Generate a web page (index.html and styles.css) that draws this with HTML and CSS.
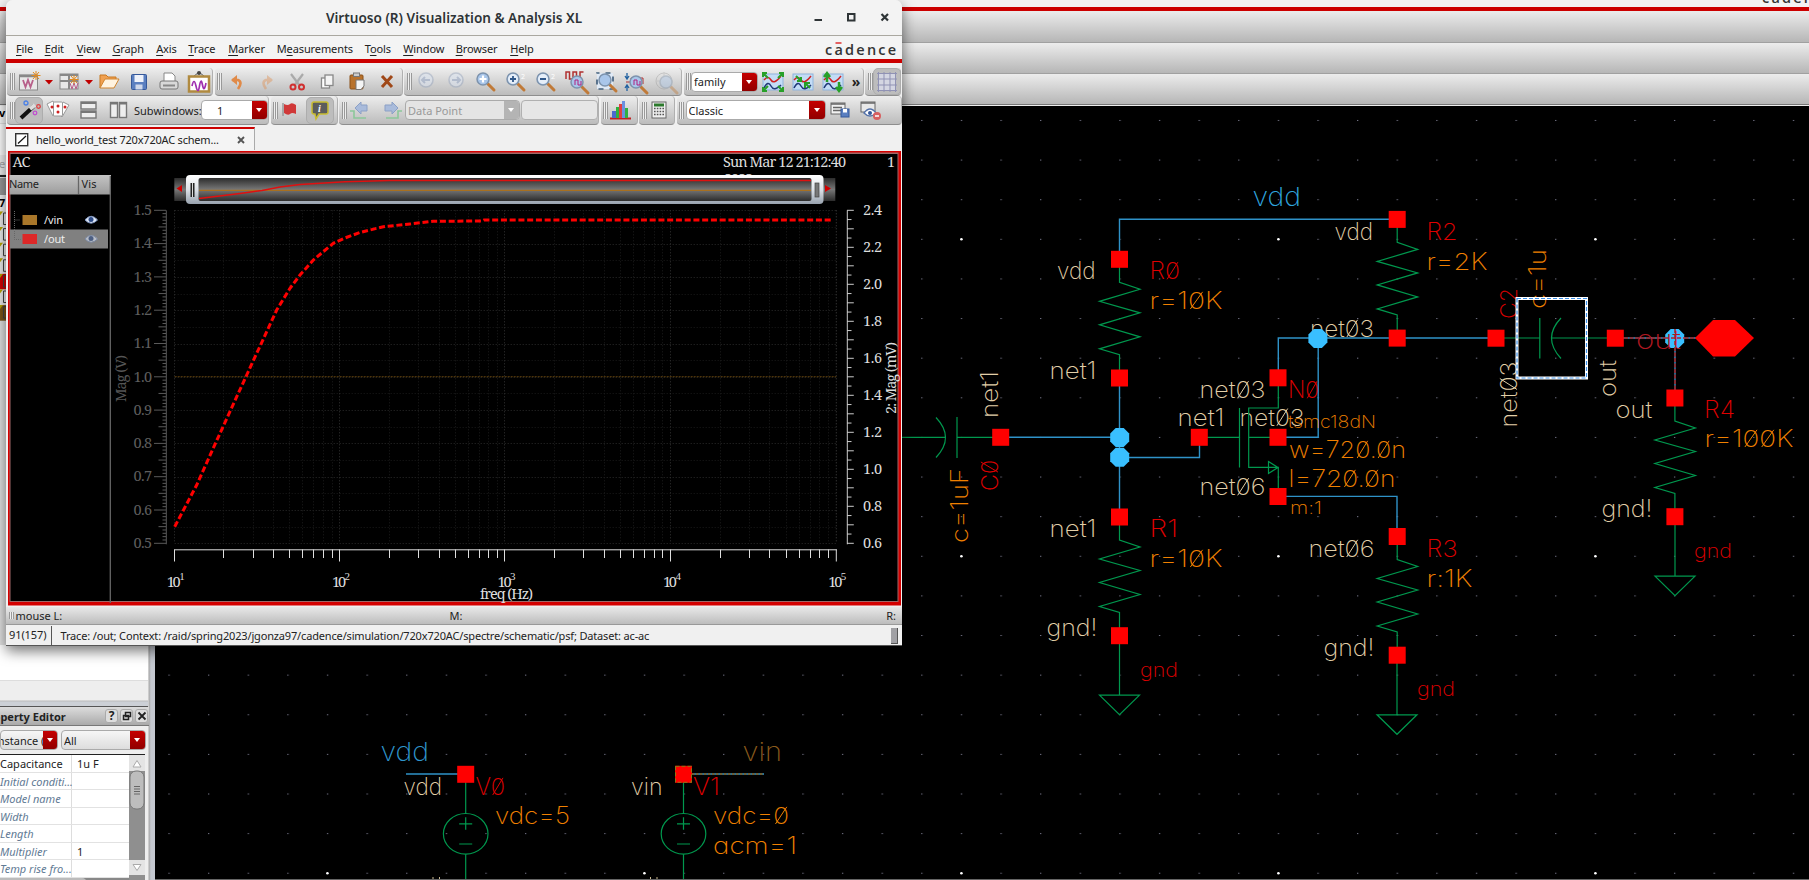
FILE: index.html
```html
<!DOCTYPE html>
<html lang="en">
<head>
<meta charset="utf-8">
<title>Virtuoso (R) Visualization &amp; Analysis XL</title>
<link rel="stylesheet" href="styles.css">
</head>
<body>
<div class="desktop">
  <header class="main-top">
    <div class="main-menu"><svg width="50" height="6"><text class="brand" x="3" y="2.5" textLength="71">cadence</text></svg></div>
    <div class="main-bar b1"></div>
    <div class="main-bar b2"></div>
    <div class="main-bar b3"></div>
  </header>
  <div class="main-body">
    <aside class="dock">
      <svg class="dock-strip" width="155" height="539" viewBox="0 106 155 539">
        <rect x="0" y="106" width="155" height="539" fill="#e2e2e2"/>
        <rect y="106" width="6" height="17" fill="#fafafa"/><text x="-1" y="117" class="strip-b">v</text>
        <rect y="124" width="6" height="31" fill="#fff"/><rect y="155" width="6" height="19" fill="#f0f0f0"/>
        <text x="-1" y="168" class="strip-g">e</text>
        <rect y="175" width="6" height="2" fill="#222"/><rect y="178" width="6" height="17" fill="#999"/>
        <rect y="195" width="6" height="16" fill="#f3f3f3"/><text x="-1" y="207" class="strip-b">7</text>
        <g id="strip"></g>
        <rect x="6" y="600" width="143" height="45" fill="#fff"/>
      </svg>
      <div class="blank"></div>
      <div class="gap"></div>
      <div class="prop-head"><span class="ph-text">Property Editor</span><i>?</i><i><svg width="10" height="10"><path d="M3.5 1.5h5v4h-5zM1.5 4.5h5v4h-5z" fill="#ddd" stroke="#222" stroke-width="1.5"/></svg></i><i><svg width="10" height="10"><path d="M1.5 1.5l7 7m0-7l-7 7" stroke="#222" stroke-width="1.8"/></svg></i></div>
      <div class="prop-combos">
        <div class="combo c-inst"><span>Instance (</span><b></b></div>
        <div class="combo c-all"><span>All</span><b></b></div>
      </div>
      <div class="prop-table">
        <div class="rows">
          <div class="row on"><span>Capacitance</span><span>1u F</span></div>
          <div class="row"><span>Initial conditi...</span><span></span></div>
          <div class="row"><span>Model name</span><span></span></div>
          <div class="row"><span>Width</span><span></span></div>
          <div class="row"><span>Length</span><span></span></div>
          <div class="row"><span>Multiplier</span><span class="val">1</span></div>
          <div class="row"><span>Temp rise fro...</span><span></span></div>
          <div class="hbar"><div></div></div>
        </div>
        <svg class="vbar" width="16" height="126">
          <rect width="16" height="126" fill="#8f8f8f"/>
          <rect width="16" height="16" fill="#e4e4e4"/><path d="M4 12l4-6.500 4 6.500z" fill="#fff" stroke="#aaa"/>
          <rect x="1" y="16" width="14" height="38" rx="6" fill="#bdbdbd" stroke="#777"/>
          <path d="M5 31.500h6m-6 2.500h6m-6 2.500h6m-6 2.500h6" stroke="#666"/>
          <rect y="105" width="16" height="15" fill="#e4e4e4"/><path d="M4 109.500h8l-4 6z" fill="#fff" stroke="#aaa"/>
        </svg>
      </div>
    </aside>

    <svg class="canvas" width="1654" height="774" viewBox="155 106 1654 774">
      <defs>
        <pattern id="dots" x="168.400" y="199.200" width="39.620" height="39.620" patternUnits="userSpaceOnUse"><rect width="1.300" height="1" fill="#77778a"/></pattern>
        <g id="pin"><rect x="-8.500" y="-8.500" width="17" height="17" fill="#f00"/></g>
        <g id="res"><path class="g" d="M0 0V23L20.500 30L-20 42L20.500 53.500L-20 65.500L20.500 77.500L-20 89.500L0 95.500V118.700"/><use href="#pin"/><use href="#pin" y="118.700"/></g>
        <g id="gnd"><path class="g" d="M0 0V59.500M-20 59.500H20L0 79Z"/></g>
        <g id="src"><path class="g" d="M0 0V39.500M0 80V110M-6.500 49.500h13M0 43v12.500M-6.500 69.700h13"/><ellipse class="g" cy="59.500" rx="22.300" ry="20.300"/><use href="#pin"/></g>
        <path id="node" d="M-4 -9.500h8l5.500 5.500v8l-5.500 5.500h-8l-5.500 -5.500v-8z" fill="#39bfff"/>
      </defs>
      <rect x="155" y="106" width="1654" height="774" fill="#000"/>
      <rect x="155" y="106" width="1654" height="774" fill="url(#dots)"/>
      <g fill="#fff" id="stars"></g>

      <g class="w">
        <path d="M1119.500 252V219.300H1397"/>
        <path d="M1119.500 378V517M1001 437.300H1119.500M1119.500 457.500H1199.500V437.300"/>
        <path d="M1278.300 378V338H1497M1318.200 338V437.300H1278M1278 496.400H1397V536"/>
        <path d="M406 774H466M684 774H764"/>
        <path d="M1615 338H1697M1675 338V398"/>
      </g>
      <path d="M1624 338H1697M1675 347V390" stroke="#a02020" stroke-width="1.600" stroke-dasharray="4 1.500"/>
      <path d="M692 774H764" stroke="#8a5a14" stroke-width="1.500" stroke-dasharray="2.500 1.500"/>

      <g class="lbl tan">
        <text x="1310" y="337" textLength="64">net03</text>
        <text x="1334.500" y="240" textLength="38.500">vdd</text>
        <text x="1057" y="279.300" textLength="38.500">vdd</text>
        <text x="1049.500" y="378.500" textLength="47">net1</text>
        <text x="1199.500" y="398.300" textLength="66">net03</text>
        <text x="1177.500" y="425.700" textLength="47">net1</text>
        <text x="1239.500" y="425.700" textLength="65">net03</text>
        <text x="1199.500" y="495.300" textLength="66">net06</text>
        <text x="1308.500" y="557" textLength="66">net06</text>
        <text x="1049.500" y="537" textLength="47">net1</text>
        <text x="1046.500" y="636" textLength="51">gnd!</text>
        <text x="1323.500" y="655.500" textLength="51">gnd!</text>
        <text x="1601.500" y="516.500" textLength="51">gnd!</text>
        <text x="1615.500" y="418" textLength="37">out</text>
        <text x="403.500" y="794.700" textLength="38.500">vdd</text>
        <text x="631" y="795" textLength="31.500">vin</text>
        <text transform="translate(998 418)rotate(-90)" textLength="47">net1</text>
        <text transform="translate(1517 427.500)rotate(-90)" textLength="66">net03</text>
        <text transform="translate(1615.500 397)rotate(-90)" textLength="37">out</text>
      </g>
      <g class="lbl red">
        <text x="1149.500" y="279.300" textLength="30.500">R0</text>
        <text x="1149.500" y="537" textLength="28.500">R1</text>
        <text x="1426.500" y="240" textLength="31">R2</text>
        <text x="1426.500" y="557" textLength="31">R3</text>
        <text x="1704" y="418" textLength="31">R4</text>
        <text x="1288" y="398.300" textLength="31">N0</text>
        <text x="475.500" y="795" textLength="29.500">V0</text>
        <text x="693" y="795" textLength="27">V1</text>
        <text transform="translate(998 491)rotate(-90)" textLength="31">C0</text>
        <text transform="translate(1517 319)rotate(-90)" textLength="31">C2</text>
        <text class="s20" x="1140" y="676.500" textLength="38">gnd</text>
        <text class="s20" x="1417" y="696" textLength="38">gnd</text>
        <text class="s20" x="1694" y="557.500" textLength="38">gnd</text>
      </g>
      <g class="lbl org">
        <text x="1149.500" y="309" textLength="73">r=10K</text>
        <text x="1149.500" y="567" textLength="73">r=10K</text>
        <text x="1426.500" y="269.500" textLength="61">r=2K</text>
        <text x="1426.500" y="587" textLength="46">r:1K</text>
        <text x="1704.500" y="447" textLength="89">r=100K</text>
        <text x="1289" y="458" textLength="117">w=720.0n</text>
        <text x="1288.500" y="487" textLength="107">l=720.0n</text>
        <text class="s18" x="1288" y="428" textLength="88">tsmc18dN</text>
        <text class="s18" x="1290" y="514" textLength="32">m:1</text>
        <text x="495" y="824" textLength="75">vdc=5</text>
        <text x="713" y="824" textLength="76">vdc=0</text>
        <text x="713" y="854" textLength="84">acm=1</text>
        <text transform="translate(968 543)rotate(-90)" textLength="75">c=1uF</text>
        <text transform="translate(1546 309)rotate(-90)" textLength="60">c=1u</text>
      </g>
      <g class="lbl big">
        <text x="1252.500" y="206" textLength="48.500" fill="#2fa3dd">vdd</text>
        <text x="380.500" y="760.500" textLength="48.500" fill="#2f95cc">vdd</text>
        <text x="742.500" y="761" textLength="39.500" fill="#8a5a1c">vin</text>
      </g>
      <path d="M433 877v3m6.500 -3v3M650.500 877v3m6.500 -3v3" stroke="#c9b78f"/>

      <use href="#gnd" x="1119.500" y="635.700"/><use href="#gnd" x="1397" y="655.300"/><use href="#gnd" x="1675" y="516.700"/>
      <use href="#res" x="1119.500" y="259.300"/><use href="#res" x="1119.500" y="517"/>
      <use href="#res" x="1397.200" y="219.400"/><use href="#res" x="1397.200" y="536.500"/><use href="#res" x="1674.900" y="398"/>
      <use href="#src" x="465.700" y="774.300"/><use href="#src" x="683.500" y="774.300"/>
      <rect x="675.500" y="766.300" width="16" height="16" fill="none" stroke="#8a7a14" stroke-dasharray="4 2"/>
      <path class="g" d="M902 437.300H945.500M936 417.500Q955 437.500 936 457.500M957 417V458M957 437.300H1000"/>
      <path class="g" d="M1199 437.300H1239.500M1239.500 408V467.500M1278.300 378V408H1248.700V467.300H1278.300V496M1248.700 437.300H1278M1268.500 461.500L1278 467.400L1268.500 473.500Z"/>
      <path class="g" d="M1496 338H1539.800M1539.800 318V358.500M1561 318Q1542 338 1561 358.500M1551.500 338H1615"/>
      <use href="#pin" x="1000.700" y="437.300"/><use href="#pin" x="1199.300" y="437.300"/><use href="#pin" x="1278" y="437.300"/>
      <use href="#pin" x="1278" y="377.800"/><use href="#pin" x="1278" y="496.500"/><use href="#pin" x="1496" y="338.200"/><use href="#pin" x="1615.300" y="338.200"/>
      <use href="#node" x="1119.700" y="437.500"/><use href="#node" x="1119.700" y="457.300"/><use href="#node" x="1317.900" y="338.400"/><use href="#node" x="1674.700" y="338.400"/>
      <path d="M1665 338H1685M1675 329V348" stroke="#b02030" stroke-width="1.600" stroke-dasharray="4 2"/>
      <g class="lbl big"><text x="1636" y="349" textLength="45" fill="#b01820">out</text></g>
      <path d="M1695 338L1713 320H1735L1754 338L1735 356.500H1713Z" fill="#f00"/>
      <rect x="1517" y="298.500" width="69.500" height="79.500" fill="none" stroke="#fff" stroke-width="3"/>
      <rect x="1517" y="298.500" width="69.500" height="79.500" fill="none" stroke="#3a8fe8" stroke-width="1.200" stroke-dasharray="4 2"/>
      <rect x="155" y="879" width="1654" height="1" fill="#666"/>
    </svg>
  </div>

  <section class="window">
    <div class="title"><h1>Virtuoso (R) Visualization &amp; Analysis XL</h1>
      <svg class="winbtns" width="90" height="34" viewBox="806 0 90 34"><path d="M814.500 20h7.500" stroke="#2e3436" stroke-width="2.200"/><rect x="848" y="14" width="6.500" height="6.500" fill="none" stroke="#2e3436" stroke-width="2"/><path d="M881.500 14l6.500 6.500m0-6.500l-6.500 6.500" stroke="#2e3436" stroke-width="2.200"/></svg>
    </div>
    <nav class="menu"><span><u>F</u>ile</span><span><u>E</u>dit</span><span><u>V</u>iew</span><span><u>G</u>raph</span><span><u>A</u>xis</span><span><u>T</u>race</span><span><u>M</u>arker</span><span>M<u>e</u>asurements</span><span>T<u>o</u>ols</span><span><u>W</u>indow</span><span><u>B</u>rowser</span><span><u>H</u>elp</span>
      <svg class="logo" width="76" height="22" viewBox="822 37 76 22"><text class="brand" x="825" y="54" textLength="71">cadence</text><path d="M835.500 42h6" stroke="#e03030" stroke-width="1.600"/></svg>
    </nav>

    <div class="tools r1">
      <div class="grp" style="width:206px"><em></em>
        <svg class="i28" viewBox="-14 -14 28 28"><rect x="-9.500" y="-7" width="18" height="15" fill="#e8e8e8" stroke="#888"/><path d="M-9.500 -6h18" stroke="#888" stroke-width="2.500"/><path d="M-6 -2l2.500 7 2.500-7 2.500 7 2.500-7" fill="none" stroke="#b8608a" stroke-width="1.800"/><path d="M7 -11v9M2.500 -6.500h9M4 -10l6 7m0-7l-6 7" stroke="#e08a20"/></svg>
        <svg class="i12" viewBox="0 0 12 12"><path d="M2 4h8l-4 4.500z" fill="#c00000"/></svg>
        <svg class="i28" viewBox="-14 -14 28 28"><rect x="-9" y="-8" width="18" height="15" fill="#e8e8e8" stroke="#888"/><path d="M-9 -7h18M-9 -1h18M0 -8v15" stroke="#888" stroke-width="2"/><path d="M1 1l2 6 2-6 2 6 2-6" fill="none" stroke="#b8608a"/><path d="M5 -7v9M0.500 -2.500h9M2 -6l6 7m0-7l-6 7" stroke="#e08a20"/></svg>
        <svg class="i12" viewBox="0 0 12 12"><path d="M2 4h8l-4 4.500z" fill="#c00000"/></svg>
        <svg class="i30" viewBox="-14 -14 30 28"><path d="M-9 6V-7h6l2 2h8v4" fill="#f0a050" stroke="#c97820"/><path d="M-9 6L-4 -3H10L5 6Z" fill="#fff3e0" stroke="#d08530"/></svg>
        <svg class="i30" viewBox="-14 -14 30 28"><rect x="-7.500" y="-7.500" width="15" height="15" rx="1" fill="#5a7fc0" stroke="#35589a"/><rect x="-4.500" y="-7" width="9" height="7" fill="#eef2fa"/><rect x="-3.500" y="2.500" width="7" height="5" fill="#cfd8ea"/></svg>
        <svg class="i30" viewBox="-14 -14 30 28"><path d="M-5 -1V-9H3L6 -6V-1" fill="#fff" stroke="#888"/><rect x="-9" y="-1" width="18" height="8" rx="2" fill="#d8d8d8" stroke="#777"/><path d="M-6 3.500h12" stroke="#888" stroke-width="2"/></svg>
        <svg class="i30" viewBox="-14 -14 30 28"><path d="M-6 -5L0 -10L6 -5" fill="none" stroke="#555"/><circle cy="-9" r="2" fill="#444"/><rect x="-10" y="-5.500" width="20" height="15" fill="#fff" stroke="#b08a40" stroke-width="2.500"/><path d="M-7 4q2-9 4 0t3.500 0t3-1t3.500-2" fill="none" stroke="#a030b0" stroke-width="1.700"/></svg>
      </div>
      <div class="grp" style="width:188px"><em></em>
        <svg class="i30" viewBox="-15 -14 30 28"><path d="M-5 -2H1Q6 0 1 7" fill="none" stroke="#e08a48" stroke-width="2.600"/><path d="M-6 -2L0 -7V3Z" fill="#e08a48"/></svg>
        <svg class="i30" viewBox="-15 -14 30 28" opacity=".4"><path d="M5 -2H-1Q-6 0 -1 7" fill="none" stroke="#e08a48" stroke-width="2.600"/><path d="M6 -2L0 -7V3Z" fill="#e08a48"/></svg>
        <svg class="i30" viewBox="-15 -14 30 28"><path d="M-6 -8L3 4M6 -8L-3 4" stroke="#aaa" stroke-width="2.200"/><circle cx="-4" cy="5" r="2.500" fill="none" stroke="#d03030" stroke-width="2"/><circle cx="4.500" cy="5" r="2.500" fill="none" stroke="#d03030" stroke-width="2"/></svg>
        <svg class="i30" viewBox="-15 -14 30 28"><rect x="-5.500" y="-4" width="8" height="10" fill="#fff" stroke="#888" stroke-width="1.300"/><rect x="-2" y="-7" width="8" height="10.500" fill="#f4f4f4" stroke="#888" stroke-width="1.300"/></svg>
        <svg class="i30" viewBox="-15 -14 30 28"><rect x="-7" y="-7" width="13" height="14" rx="1" fill="#b8722c" stroke="#8a5018"/><rect x="-3.500" y="-9" width="6" height="3.500" fill="#ccc" stroke="#777"/><path d="M-1 -2h8v6l-3 3.500h-5z" fill="#f4f4f4" stroke="#777"/></svg>
        <svg class="i30" viewBox="-15 -14 30 28"><path d="M-5 -6L5 5M5 -6L-5 5" stroke="#a04818" stroke-width="3"/></svg>
      </div>
      <div class="grp" style="width:278px"><em></em>
        <svg class="i30" viewBox="-14 -13 30 28" opacity=".5"><circle r="7" cy="-1" fill="#dbe4f2" stroke="#9aa8c0" stroke-width="1.500"/><path d="M4 -1H-4M-1 -4L-4 -1L-1 2" fill="none" stroke="#8fa2c4" stroke-width="2"/></svg>
        <svg class="i30" viewBox="-14 -13 30 28" opacity=".5"><circle r="7" cy="-1" fill="#dbe4f2" stroke="#9aa8c0" stroke-width="1.500"/><path d="M-4 -1H4M1 -4L4 -1L1 2" fill="none" stroke="#8fa2c4" stroke-width="2"/></svg>
        <svg class="i30" viewBox="-13 -13 30 28"><use href="#mag"/><path d="M-5.500 -2h7M-2 -5.500v7" stroke="#fff" stroke-width="2.200"/></svg>
        <svg class="i30" viewBox="-13 -13 30 28"><use href="#mag"/><circle cx="-2" cy="-2" r="5" fill="#e6eef8"/><path d="M-5 -2h6M-2 -5v6" stroke="#30588a" stroke-width="1.800"/><text x="6" y="-2" class="two">2</text></svg>
        <svg class="i30" viewBox="-13 -13 30 28"><use href="#mag"/><circle cx="-2" cy="-2" r="5" fill="#e6eef8"/><path d="M-5 -2h6" stroke="#30588a" stroke-width="2"/><text x="6" y="-2" class="two">2</text></svg>
        <svg class="i30" viewBox="-14 -14 30 28"><path d="M-10 -3v-7h3.500v7h3.500v-7h3.500v7h3.500v-7h3.500" fill="none" stroke="#b03030" stroke-width="1.500"/><g transform="translate(3 2)"><use href="#mag"/><path d="M-4 1v-5h3v5h3v-4" fill="none" stroke="#b02080"/></g></svg>
        <svg class="i30" viewBox="-13 -14 30 28"><rect x="-8" y="-9" width="16" height="16" fill="#dfe9f5" stroke="#44617e" stroke-width="1.700" stroke-dasharray="5 6" stroke-dashoffset="2.500"/><g transform="translate(2 0)"><use href="#mag"/></g></svg>
        <svg class="i30" viewBox="-13 -14 30 28"><path d="M-8 -9v6M-8 9v-6M-10 -6l2 3 2-3M-10 6l2-3 2 3" fill="none" stroke="#2060a0" stroke-width="1.300"/><path d="M-9 0h5v-4h12v6" fill="none" stroke="#b03030"/><g transform="translate(3 2)"><use href="#mag"/><path d="M-4 1v-5h3v5h3v-4" fill="none" stroke="#b02080"/></g></svg>
        <svg class="i30" viewBox="-13 -14 30 28" opacity=".4"><circle r="8" cx="-1" cy="-1" fill="none" stroke="#999"/><path d="M-9 -1H8M-1 -10V8" stroke="#aaa"/><g transform="translate(3 2)"><use href="#mag"/></g></svg>
      </div>
      <div class="grp" style="width:180px"><em></em>
        <div class="combo" style="width:67px"><span>family</span><b></b></div>
        <svg class="i30" viewBox="-15 -14 30 28"><use href="#wv"/><path d="M-5 -4l-4-4M5 -4l4-4M-5 4l-4 4M5 4l4 4M-10 -5v-4h4M10 -5v-4h-4M-10 5v4h4M10 5v4h-4" fill="none" stroke="#28a028" stroke-width="2"/></svg>
        <svg class="i30" viewBox="-15 -14 30 28"><use href="#wv"/><path d="M-7 -6l5 5M7 6L2 1M-2 -5v4h-4M2 6V1h5" fill="none" stroke="#28a028" stroke-width="2"/></svg>
        <svg class="i30" viewBox="-15 -14 30 28"><use href="#wv"/><path d="M-6 0v-8M-9 -5l3-4 3 4M6 0v8M3 5l3 4 3-4" fill="none" stroke="#28a028" stroke-width="2.500"/></svg>
        <span class="more">»</span>
      </div>
      <div class="grp last" style="width:36px"><em></em>
        <div class="press"><svg width="22" height="22" viewBox="-11 -11 22 22"><rect x="-9" y="-9" width="18" height="18" fill="#d4d6e2"/><path d="M-10 -8.500h20M-10 -3h20M-10 3h20M-10 8.500h20M-8.500 -10v20M-3 -10v20M3 -10v20M8.500 -10v20" stroke="#9092b4"/></svg></div>
      </div>
    </div>

    <div class="tools r2">
      <div class="grp" style="width:262px"><em></em>
        <div class="press"><svg width="26" height="26" viewBox="-13 -13 26 26"><path d="M-8 8L5 -4" stroke="#111" stroke-width="4"/><path d="M1 -1L6 -5" stroke="#ddd" stroke-width="4"/><circle cx="-3" cy="-7" r="2" fill="none" stroke="#4a80e8" stroke-width="1.300"/><circle cx="9.500" cy="-3.500" r="1.800" fill="none" stroke="#e04040" stroke-width="1.300"/><circle cx="6" cy="3" r="1.800" fill="none" stroke="#c050d0" stroke-width="1.300"/></svg></div>
        <svg class="i30" viewBox="-15 -14 30 28"><g stroke="#999"><path d="M-11 -6l6-3 5 11-5 4z" fill="#fff"/><path d="M11 -5l-6-3-6 10 5 5z" fill="#fff"/><rect x="-4.500" y="-8" width="9" height="14" rx="1" fill="#fff"/></g><circle cx="-6" cy="-3" r="1.500" fill="#d02020"/><circle cx="0" cy="-4" r="1.500" fill="#d02020"/><circle cx="0" cy="2" r="1.500" fill="#d02020"/><circle cx="7" cy="-3" r="1.500" fill="#d02020"/></svg>
        <svg class="i30" viewBox="-15 -14 30 28"><g fill="#eee" stroke="#777" stroke-width="1.400"><rect x="-7" y="-8" width="15" height="7"/><rect x="-7" y="1" width="15" height="7"/></g><path d="M-7 -7h15M-7 2h15" stroke="#777" stroke-width="2"/></svg>
        <svg class="i30" viewBox="-15 -14 30 28"><g fill="#eee" stroke="#777" stroke-width="1.400"><rect x="-7.500" y="-7.500" width="7" height="15"/><rect x="1.500" y="-7.500" width="7" height="15"/></g><path d="M-8 -6.500h8M1 -6.500h8" stroke="#777" stroke-width="2"/></svg>
        <span class="lab">Subwindows:</span>
        <div class="combo c1" style="width:67px"><span>1</span><b></b></div>
      </div>
      <div class="grp" style="width:67px"><em></em>
        <svg class="i28" viewBox="-10 -14 28 28"><path d="M-5 -7V6" stroke="#999" stroke-width="1.500"/><path d="M-4 -6q4 2 6 0t6 1v9q-4-2-6 0t-6-1z" fill="#d03838"/></svg>
        <div class="press"><svg width="26" height="26" viewBox="-13 -13 26 26"><path d="M-6 -8h12q2 0 2 2v8q0 2-2 2h-7l-3 5-1-5h-1q-2 0-2-2v-8q0-2 2-2z" fill="#5c5c5c" stroke="#c8bc30" stroke-width="1.500"/><text x="-2" y="2" class="info">i</text></svg></div>
      </div>
      <div class="grp" style="width:260px"><em></em>
        <svg class="i30" viewBox="-14 -14 30 28"><path d="M-6 -2L0 -8V-5H6V1H0V4Z" fill="#a9bbdb" stroke="#8ba0c6"/><path d="M-11 1h4v7h12" fill="none" stroke="#8cc79a" stroke-width="1.600"/></svg>
        <svg class="i30" viewBox="-13 -14 30 28"><path d="M8 -2L2 -8V-5H-5V1H2V4Z" fill="#a9bbdb" stroke="#8ba0c6"/><path d="M12 1h-4v7h-12" fill="none" stroke="#8cc79a" stroke-width="1.600"/></svg>
        <div class="combo off" style="width:115px"><span>Data Point</span><b></b></div>
        <div class="field"></div>
      </div>
      <div class="grp" style="width:37px"><em></em>
        <svg class="i28" viewBox="-12 -14 28 28"><path d="M-10 8.500h21" stroke="#c02020" stroke-width="2"/><path d="M-8 8V1h4v7z" fill="#4a68d0"/><path d="M-4 8V-3h3v11z" fill="#30b040"/><path d="M-1 8V-6h3v14z" fill="#e04040"/><path d="M2 8V-9h3v17z" fill="#6a90e0"/><path d="M5 8V-2h3v10z" fill="#30b040"/></svg>
      </div>
      <div class="grp" style="width:36px"><em></em>
        <svg class="i28" viewBox="-12 -14 28 28"><rect x="-7" y="-8" width="14" height="16" fill="#f0f0f0" stroke="#666"/><rect x="-5" y="-6.500" width="10" height="3" fill="#2c7a2c"/><path d="M-5 -1.500h10M-5 1.500h10M-5 4.500h10" stroke="#555" stroke-width="1.600" stroke-dasharray="1.600 1.200"/></svg>
      </div>
      <div class="grp last" style="width:225px"><em></em>
        <div class="combo" style="width:140px;margin-left:1.500px"><span>Classic</span><b></b></div>
        <svg class="i30" viewBox="-15 -14 30 28"><rect x="-10" y="-7" width="14" height="11" fill="#f2f2f2" stroke="#666"/><path d="M-10 -6h14M-8 -2.500h9M-8 .5h9" stroke="#666" stroke-width="1.500"/><rect x="0" y="-1" width="8" height="8" fill="#5a7fc0" stroke="#35589a"/><rect x="2" y="-1" width="4" height="3.500" fill="#fff"/></svg>
        <svg class="i30" viewBox="-15 -14 30 28"><rect x="-10" y="-8" width="14" height="10" fill="#e8e8e8" stroke="#666"/><path d="M-10 -7h14" stroke="#666" stroke-width="1.500"/><path d="M-7 3q6-8 12 0q-6 6-12 0z" fill="#fff" stroke="#5572a8" stroke-width="1.400"/><circle cx="-1" cy="3" r="2" fill="#35589a"/><circle cx="6" cy="6" r="4" fill="#d86060"/><path d="M4 6h4" stroke="#fff" stroke-width="1.300"/></svg>
      </div>
    </div>

    <div class="tabs"><div class="tab"><svg width="14" height="14"><rect x=".7" y=".7" width="12" height="12" fill="#fff" stroke="#333" stroke-width="1.400"/><path d="M3 10.500L11 3" stroke="#111" stroke-width="1.200"/></svg><span>hello_world_test 720x720AC schem...</span><svg class="x" width="8" height="8"><path d="M1 1l6 6m0-6L1 7" stroke="#555" stroke-width="1.900"/></svg></div></div>

    <svg class="plot" width="896" height="456" viewBox="6 150 896 456">
      <defs>
        <g id="mag"><path d="M3 3l6 6" stroke="#c07a38" stroke-width="3" stroke-linecap="round"/><circle cx="-2" cy="-2" r="6" fill="#a9c6ea" stroke="#7d93ad" stroke-width="1.500"/></g>
        <g id="wv"><rect x="-10" y="-8" width="20" height="16" fill="#c3dcf6" stroke="#8fb4dc"/><path d="M-9 -2q4-5 7 0t10-4" fill="none" stroke="#d02020" stroke-width="1.500"/><path d="M-9 6q4-8 7-2t10-1" fill="none" stroke="#203878" stroke-width="1.500"/></g>
        <linearGradient id="sil" x2="0" y2="1"><stop offset="0" stop-color="#fff"/><stop offset=".5" stop-color="#dde2e8"/><stop offset="1" stop-color="#98a2ae"/></linearGradient>
        <linearGradient id="trk" x2="0" y2="1"><stop offset="0" stop-color="#2c2c2c"/><stop offset=".5" stop-color="#777"/><stop offset="1" stop-color="#2c2c2c"/></linearGradient>
        <linearGradient id="hd" x2="0" y2="1"><stop offset="0" stop-color="#c4c4c4"/><stop offset="1" stop-color="#9c9c9c"/></linearGradient>
      </defs>
      <rect x="6" y="150" width="896" height="456" fill="#f0f0f0"/>
      <rect x="8" y="151" width="893" height="454.500" fill="#d40000"/>
      <rect x="9.500" y="152.500" width="889" height="449.500" fill="#a06868"/>
      <rect x="10.500" y="154" width="887" height="447" fill="#000"/>
      <g id="chart"></g>
      <path d="M174.700 376.700H836.300" stroke="#5e3f0c" stroke-dasharray="2 1"/>
      <path d="M174.700 526.700L196.700 485L220 433.300L246.700 375L266.700 331.700L276.700 310L290 288.300L300 275L313.300 260L333.300 243.300L345 238L360 232.500L383.300 226.700L410 224L433 221.300L482 221L484 220H831.500" fill="none" stroke="#f00" stroke-width="3" stroke-dasharray="6 2.750"/>
      <g class="ser" fill="#ddd">
        <text x="12.500" y="167" textLength="18">AC</text>
        <text x="12.500" y="184.500" textLength="8">T</text>
        <text x="723" y="167" textLength="123">Sun Mar 12 21:12:40</text>
        <text x="724" y="184" textLength="29">2023</text>
        <text x="887" y="167">1</text>
        <text x="480" y="598.500" textLength="53">freq (Hz)</text>
        <text transform="translate(895.500 414)rotate(-90)" textLength="72">2: Mag (mV)</text>
        <text transform="translate(126 402)rotate(-90)" textLength="47" fill="#555">Mag (V)</text>
      </g>
      <rect x="9.500" y="175" width="101.500" height="19.500" fill="url(#hd)"/>
      <path d="M78.500 176v18M110.300 176v427" stroke="#666" stroke-width="1.300"/>
      <g class="ui"><text x="9" y="188" textLength="30" fill="#222">Name</text><text x="81.500" y="188" textLength="15" fill="#222">Vis</text></g>
      <rect x="10" y="229.500" width="98" height="19" fill="#808080"/>
      <path d="M14.500 211v28.500h6M14.500 220h6" fill="none" stroke="#666" stroke-dasharray="1 1"/>
      <rect x="22.500" y="215" width="14.500" height="10" fill="#a9772a"/><rect x="22.500" y="234" width="14.500" height="10" fill="#dc2828"/>
      <g class="ui" fill="#eee"><text x="44" y="223.500" textLength="19">/vin</text><text x="44" y="243" textLength="21">/out</text></g>
      <g id="eye"><path d="M85 220q6-7.500 12.500 0q-6.500 6.500-12.500 0z" fill="#dfe7f5" stroke="#7c92bd"/><circle cx="91" cy="219.500" r="2.500" fill="#2c4a86"/></g>
      <use href="#eye" y="19" opacity=".6"/>
      <rect x="174.300" y="178" width="661" height="23" fill="url(#trk)"/>
      <path d="M176.500 188.500l5.500-3.500v7z" fill="#d00000"/><path d="M831 188.500l-6-3.500v7z" fill="#d00000"/>
      <rect x="186" y="175" width="637.500" height="29" rx="4" fill="url(#sil)"/>
      <rect x="198.500" y="178" width="613" height="23" rx="2" fill="url(#trk)"/>
      <path d="M199 190.300H811" stroke="#a87020" stroke-width="1.200"/>
      <path d="M199 198.500L240 193.500L262 190.500L280 187L300 184.500L345 181.700L390 180.500H811" fill="none" stroke="#e01010" stroke-width="1.500"/>
      <rect x="190.500" y="183" width="4" height="14" fill="#222"/><path d="M192.500 183v14" stroke="#ddd"/>
      <rect x="815" y="183" width="4" height="14" fill="#777" stroke="#444" stroke-width=".7"/>
    </svg>

    <div class="mouse"><em></em><span>mouse L:</span><span>M:</span><span>R:</span></div>
    <div class="status"><span class="n">91(157)</span><span class="t">Trace: /out; Context: /raid/spring2023/jgonza97/cadence/simulation/720x720AC/spectre/schematic/psf; Dataset: ac-ac</span><i></i></div>
  </section>
</div>
<script src="chart.js"></script>
</body>
</html>
```

FILE: chart.js
```js
const X0 = 174.7, X1 = 836.3, Y0 = 210.3, Y1 = 543.3, DEC = (X1 - X0) / 4;
let out = '';
const line = (x1, y1, x2, y2, c, d) =>
  out += `<path d="M${x1} ${y1}L${x2} ${y2}" stroke="${c}"${d ? ` stroke-dasharray="${d}"` : ''}/>`;
const text = (x, y, s, c, len) => out += `<text class="ser" x="${x}" y="${y}" fill="${c}" textLength="${len}">${s}</text>`;

// Grid
for (let i = 0; i <= 20; i++) {
  const y = Math.round(Y0 + i * (Y1 - Y0) / 20) + 0.5;
  line(X0, y, X1, y, i % 2 ? '#1a1a1a' : '#2b2b2b', '1 2');
}
for (let d = 0; d < 4; d++) {
  for (let m = 1; m < 10; m++) {
    const x = Math.round(X0 + DEC * (d + Math.log10(m))) - 0.5;
    line(x, Y0, x, Y1, m === 1 ? '#333' : '#1c1c1c', '1 2');
    line(x, 549.5, x, m === 1 ? 561.5 : 558, '#ddd');
  }
}
line(X1, Y0, X1, Y1, '#444', '1 2');
line(X1, 549.5, X1, 561.5, '#ddd');
line(X0 - 0.5, 549.8, X1 + 0.5, 549.8, '#ddd');
for (let d = 0; d <= 4; d++) {
  text(X0 + DEC * d - 8, 586.5, '10', '#ddd', 14);
  out += `<text class="sup" x="${X0 + DEC * d + 4.5}" y="579.500" fill="#ddd">${d + 1}</text>`;
}
// Left axis
line(166.3, Y0, 166.3, Y1 + 1, '#5a5a5a');
for (let i = 0; i <= 100; i++) {
  const y = Y0 + i * (Y1 - Y0) / 100;
  line(i % 10 === 0 ? 154 : i % 5 === 0 ? 158.5 : 162.5, y, 166, y, '#5a5a5a');
  if (i % 10 === 0) text(133.5, y + 4.7, (1.5 - i / 100).toFixed(1), '#5e5e5e', 18.5);
}
// Right axis
line(847.3, Y0, 847.3, Y1 + 1, '#ccc');
for (let i = 0; i <= 36; i++) {
  const y = Y0 + i * (Y1 - Y0) / 36;
  line(847, y, i % 2 ? 851.5 : 853.8, y, '#ccc');
  if (i % 4 === 0) text(863, y + 4.7, (2.4 - i * 0.05).toFixed(1), '#ddd', 19);
}
document.getElementById('chart').innerHTML = out;

// Major grid points of the schematic
let stars = '';
for (const y of [239.3, 556.3, 873.3]) {
  for (let k = 0; k < 5; k++) stars += `<circle cx="${327.4 + 317 * k}" cy="${y}" r="1.3"/>`;
}
document.getElementById('stars').innerHTML = stars;

// Schematic labels: stretch the glyphs to their stroke-font width and slash each zero
const NS = 'http://www.w3.org/2000/svg';
document.querySelectorAll('.canvas .lbl text').forEach(t => {
  t.setAttribute('lengthAdjust', 'spacingAndGlyphs');
  const s = t.textContent, size = parseFloat(getComputedStyle(t).fontSize);
  for (let i = 0; i < s.length; i++) {
    if (s[i] !== '0') continue;
    const a = t.getStartPositionOfChar(i), b = t.getEndPositionOfChar(i);
    const w = b.x - a.x, p = document.createElementNS(NS, 'path');
    p.setAttribute('d', `M${a.x + w * 0.14} ${a.y}L${b.x - w * 0.14} ${a.y - size * 0.73}`);
    p.setAttribute('class', 'slash');
    if (t.getAttribute('transform')) p.setAttribute('transform', t.getAttribute('transform'));
    t.after(p);
  }
});

// Layer palette edge
const pal = ['#ececec', '#ececec', '#ececec', '#ececec', '#d40000', '#ececec', '#7a5518'];
document.getElementById('strip').innerHTML = pal.map((c, i) => {
  const y = 211.5 + i * 15.6;
  return `<rect y="${y}" width="6" height="15.600" fill="${c}"/><path d="M0 ${y}h3l-3 4z" fill="#b8a800"/><path d="M6 ${y + 1.5}H3.500V${y + 13}H6" fill="none" stroke="#444"/>`;
}).join('');
```

FILE: styles.css
```css
* { box-sizing: border-box; }
body { margin: 0; font: 11px "Noto Sans", "Open Sans", sans-serif; color: #222; background: #000; overflow: hidden; }
.desktop { position: relative; width: 1809px; height: 880px; overflow: hidden; display: flex; flex-direction: column; }
.main-top { height: 106px; border-bottom: 1px solid #eee; }
.main-menu { height: 11px; background: #f3f3f3; border-bottom: 4px solid #cc0000; display: flex; justify-content: flex-end; }
.main-bar { background: linear-gradient(#ececec, #b6b6b6); border-bottom: 1px solid #a0a0a0; }
.b1 { height: 32px; } .b2 { height: 31px; } .b3 { height: 31px; border-color: #777; }
.main-body { display: flex; height: 774px; }
.dock { width: 155px; background: linear-gradient(90deg, #eee 148px, #aaa 149px, #c4c8d0 151px, #c4c8d0 155px); display: flex; flex-direction: column; overflow: hidden; }
.dock-strip { display: block; flex: none; }
.strip-b { font-size: 11px; font-weight: bold; } .strip-g { font-size: 11px; fill: #aaa; }
.blank { height: 36px; width: 148px; background: #fff; border-bottom: 1px solid #ddd; flex: none; }
.gap { height: 26px; flex: none; width: 148px; background: linear-gradient(#eee 19px, #bbb 20px, #ccd0d6 21px, #ccd0d6 25px, #555 25px); }
.prop-head { width: 149px; height: 19px; flex: none; display: flex; gap: 2px; align-items: center; background: linear-gradient(#dcdcdc, #aaa); border-bottom: 1px solid #777; font-weight: bold; padding-right: 1px; }
.ph-text { margin-left: -18px; width: 122px; white-space: nowrap; }
.prop-head i { width: 13px; height: 14px; border-radius: 3px; background: #ddd; border: 1px solid #aaa; font: bold 12px/12px "Noto Sans", sans-serif; display: flex; align-items: center; justify-content: center; }
.prop-head i svg { flex: none; }
.prop-combos { display: flex; gap: 3px; height: 28px; padding-top: 4px; flex: none; }
.c-inst { width: 58px; } .c-inst span { margin-left: -9px; }
.c-all { width: 85px; }
.prop-table { display: flex; width: 145px; border-top: 1.500px solid #222; height: 126px; }
.rows { width: 129px; background: #fff; }
.row { height: 17.500px; border-bottom: 1.500px solid #e2e2e2; display: flex; color: #5f7a94; font-style: italic; line-height: 17px; white-space: nowrap; }
.row span:first-child { width: 72px; border-right: 1px solid #ddd; }
.row span:last-child { padding-left: 5px; }
.row.on, .row .val { color: #222; font-style: normal; }
.hbar { height: 6px; background: #888; } .hbar div { width: 87px; height: 6px; background: #bbb; border-radius: 0 5px 0 0; }
.vbar { flex: none; }
.canvas { display: block; flex: none; }
.g { fill: none; stroke: #00984e; stroke-width: 1.200; }
.w { fill: none; stroke: #2f92c8; stroke-width: 1.400; }
.lbl { font-family: Inter, "DejaVu Sans", sans-serif; font-weight: 200; font-size: 23.500px; font-feature-settings: "cv11"; }
.tan { fill: #e2cfa8; stroke: #e2cfa8; } .red { fill: #e00000; stroke: #e00000; } .org { fill: #f08000; stroke: #f08000; }
.lbl text { stroke: none; }
.slash { fill: none; stroke-width: 1; }
.big { font-size: 26px; } .s20 { font-size: 20px; } .s18 { font-size: 17.500px; }

.window { position: absolute; left: 6px; top: 0; width: 896px; height: 646px; background: #f0f0f0; border-radius: 7px 7px 0 0; box-shadow: 0 5px 14px rgba(0, 0, 0, .55); display: flex; flex-direction: column; overflow: hidden; border-bottom: 1px solid #555; }
.window > * { flex: none; }
.title { height: 36px; background: #f3f3f3; border-bottom: 1.500px solid #aaa8a0; position: relative; }
.title h1 { margin: 0; font: 600 13.600px/35px "Noto Sans", "Open Sans", sans-serif; text-align: center; color: #2e3436; }
.winbtns { position: absolute; right: 6px; top: 0; }
.menu { height: 27px; border-bottom: 4px solid #cc0000; display: grid; grid-template-columns: 28.700px 32px 35.700px 43.800px 32.200px 39.800px 48.500px 88px 38.500px 52.500px 54.500px 1fr 76px; padding: 2px 4px 0 10px; line-height: 22px; background: #f4f4f4; white-space: nowrap; letter-spacing: -.1px; }
.menu u { text-underline-offset: 2px; }
.brand { font: 600 14.500px "Open Sans", "Noto Sans", sans-serif; fill: #333; }
.tools { display: flex; gap: 1.500px; padding-left: 1px; height: 29px; }
.r1 { margin-top: 5px; height: 28px; }
.grp { display: flex; align-items: center; background: linear-gradient(#ededed, #bcbcbc); border-bottom: 1px solid #8e8e8e; border-right: 1px solid #b0b0b0; border-radius: 4px; flex: none; }
.grp > * { flex: none; }
.grp em, .mouse em { width: 5px; margin: 0 0 0 2.500px; height: 17px; background: repeating-linear-gradient(90deg, #999 0 1px, #eee 1px 2px); }
.i28 { width: 28px; height: 28px; } .i12 { width: 12px; height: 12px; } .i30 { width: 30px; height: 28px; }
.two { font-size: 7px; fill: #fff; }
.info { font: italic bold 10px "Liberation Serif", serif; fill: #fff; }
.more { width: 16px; text-align: center; font: bold 14px "Noto Sans", sans-serif; }
.press { width: 28px; height: 27px; border-radius: 5px; background: #bdbdbd; border: 1px solid #adadad; display: flex; align-items: center; justify-content: center; }
.lab { width: 68.500px; white-space: nowrap; padding-left: 1.500px; }
.combo { height: 20px; border: 1px solid #aaa; border-radius: 4px; background: #fff; display: flex; align-items: center; overflow: hidden; white-space: nowrap; padding-left: 2px; }
.combo span { flex: 1; overflow: hidden; }
.prop-combos .combo { background: linear-gradient(#f6f6f6, #ddd); }
.prop-combos .c-inst span { overflow: hidden; width: 48.500px; flex: none; }
.combo b { width: 15.500px; height: 20px; background: linear-gradient(#c80000, #8e0000); display: flex; align-items: center; justify-content: center; position: relative; flex: none; }
.combo b::after { content: ""; border: 3.500px solid transparent; border-top: 4px solid #fff; border-bottom: 0; }
.c1 span { padding-left: 13px; }
.off { background: #e4e4e4; color: #999; margin-left: -1.500px; } .off b { background: #b4b4b4; }
.field { width: 77px; height: 20px; border-radius: 4px; background: #e6e6e6; border: 1px solid #b0b0b0; margin-left: 1px; }
.tabs { height: 23px; margin-top: 2px; display: flex; }
.tab { width: 249px; border-top: 2px solid #cc0000; border-right: 1px solid #aaa; display: flex; align-items: center; padding-left: 9px; white-space: nowrap; background: #f4f4f4; }
.tab span { margin-left: 7px; width: 201px; letter-spacing: -.2px; }
.plot { display: block; }
.ser { font-family: "Noto Serif", "Liberation Serif", serif; font-size: 14.500px; }
.sup { font-family: "Liberation Serif", serif; font-size: 11px; }
.ui { font-size: 11px; }
.mouse { height: 18px; margin-top: 1px; background: linear-gradient(#e8e8e8, #bdbdbd); display: flex; align-items: center; border-bottom: 1px solid #999; padding-right: 6px; }
.mouse em { height: 7px; margin-right: 2px; }
.mouse span { width: 434px; } .mouse span:nth-child(3) { flex: 1; } .mouse span:last-child { width: auto; }
.status { height: 21px; display: flex; align-items: center; white-space: nowrap; padding-right: 4px; }
.status .n { width: 45.500px; height: 19px; line-height: 18px; padding-left: 3px; border-right: 1px solid #555; letter-spacing: -.1px; }
.status .t { flex: 1; padding-left: 9px; letter-spacing: -.16px; }
.status i { width: 7px; height: 16px; background: #a0a0a4; border-right: 1px solid #555; border-bottom: 1px solid #555; }
```
